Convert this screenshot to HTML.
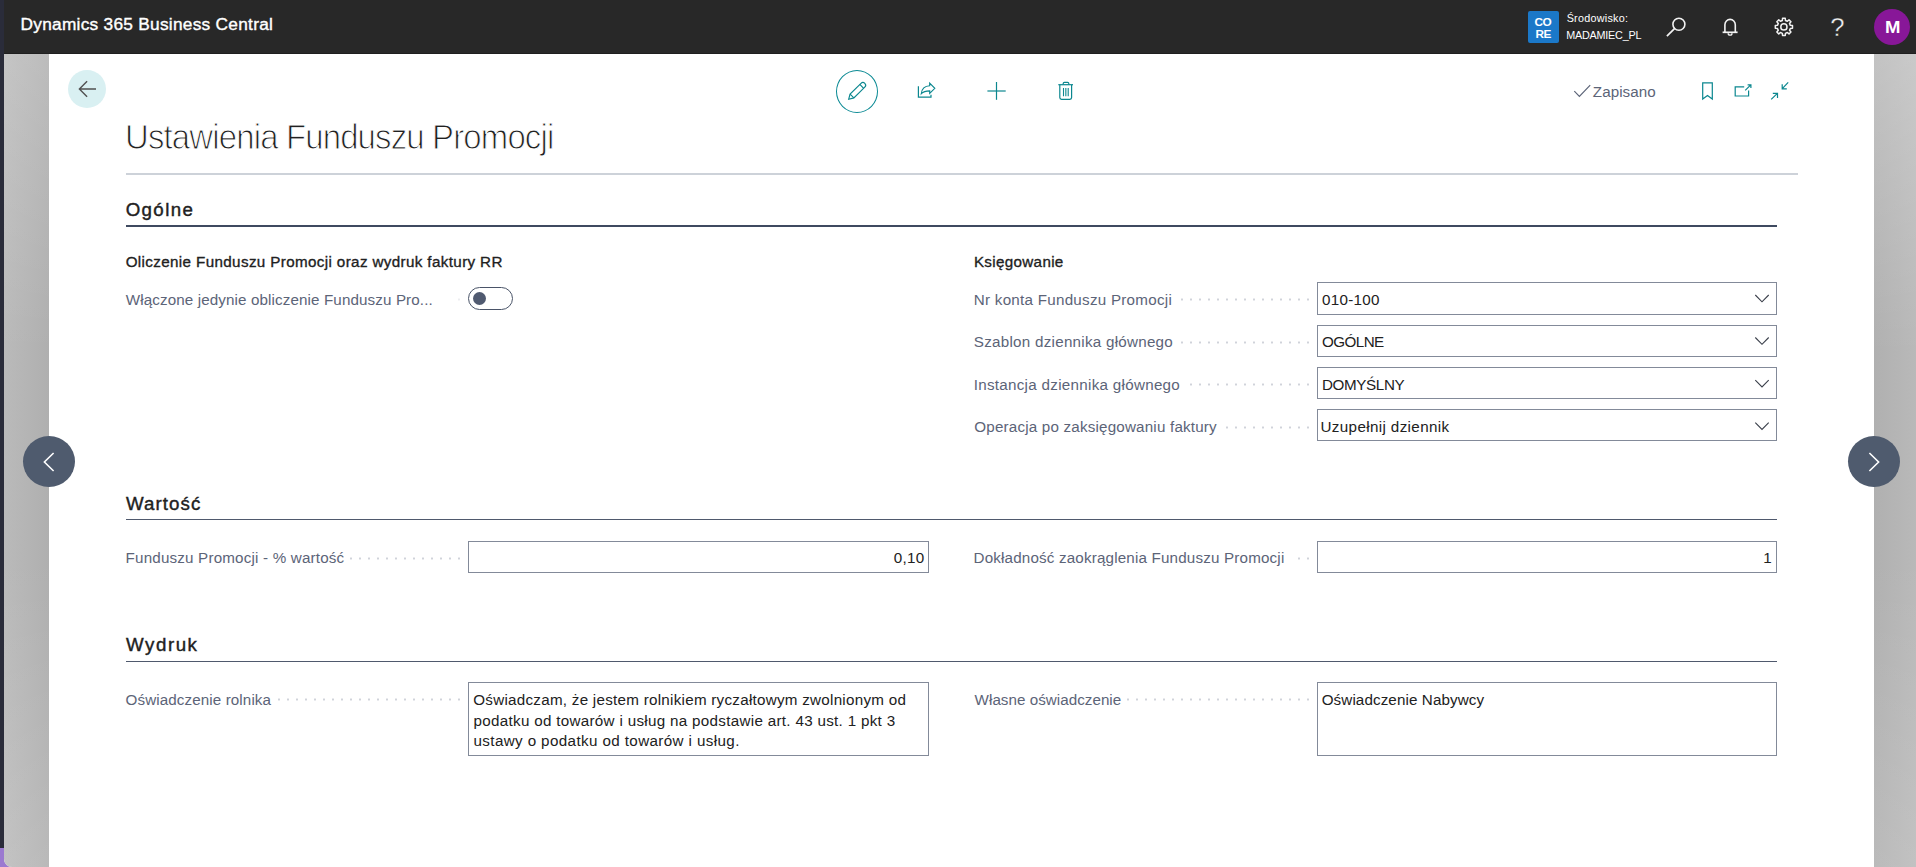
<!DOCTYPE html>
<html lang="pl">
<head>
<meta charset="utf-8">
<title>Ustawienia Funduszu Promocji - Dynamics 365 Business Central</title>
<style>
html,body{margin:0;padding:0}
body{width:1916px;height:867px;position:relative;overflow:hidden;background:#2a2c3a;font-family:"Liberation Sans",sans-serif}
.a{position:absolute}
.t{position:absolute;white-space:nowrap;line-height:1;margin:0;padding:0;font-weight:normal;display:block}
#deskp{left:0;top:848px;width:12px;height:19px;background:#9b7ad0}
#win{left:4px;top:0;width:1912px;height:867px;background:#fff;border-bottom-left-radius:8px;overflow:hidden}
#topbar{left:0;top:0;width:1912px;height:54px;background:#282828;box-shadow:inset 0 -1px 0 #1f1f1f}
#shL{left:0;top:54px;width:45px;height:813px;background:linear-gradient(180deg,rgba(255,255,255,.16) 0,rgba(255,255,255,0) 300px,rgba(255,255,255,0) 500px,rgba(255,255,255,.13) 813px),linear-gradient(90deg,#bababa,#afafaf)}
#shR{left:1870px;top:54px;width:42px;height:813px;background:linear-gradient(180deg,rgba(255,255,255,.24) 0,rgba(255,255,255,0) 300px,rgba(255,255,255,0) 500px,rgba(255,255,255,.13) 813px),linear-gradient(90deg,#b0b0b0,#b9b9b9)}
.hr{position:absolute;height:2px}
.box{position:absolute;box-sizing:border-box;border:1px solid #838a99;background:#fff}
.dots{position:absolute;height:3px;margin-top:-1px;background-image:radial-gradient(circle at 1px 1.5px,#d0d3da 0.85px,rgba(208,211,218,0) 1.35px);background-size:9px 3px;background-repeat:repeat-x}
.nav{position:absolute;width:52px;height:51px;border-radius:50%;background:#4f5b6e}
svg{position:absolute;overflow:visible}
</style>
</head>
<body>
<div class="a" id="deskp"></div>
<div class="a" id="win">
<div class="a" id="topbar"></div>
<div class="a" id="shL"></div>
<div class="a" id="shR"></div>
</div>

<!-- top bar -->
<div class="a" style="left:1528px;top:11px;width:31px;height:32px;background:#1b78c8;border-radius:2px"></div>
<div class="a" style="left:1874px;top:9px;width:36px;height:36px;border-radius:50%;background:#881798"></div>
<span class="t" id="qm" style="left:1830.3px;top:14.6px;font-size:25.6px;color:#f2f2f2;-webkit-text-stroke:0.35px #282828">?</span>
<svg width="1916" height="867" style="left:0;top:0" viewBox="0 0 1916 867" fill="none" stroke-linecap="butt" stroke-linejoin="miter">
<circle cx="1678.9" cy="24.2" r="6.0" stroke="#f2f2f2" stroke-width="1.6"/>
<path d="M1674.5,28.6 L1666.9,36.2" stroke="#f2f2f2" stroke-width="1.7"/>
<path d="M1724.9,32.2 V24.8 A5.2,5.4 0 0 1 1735.3,24.8 V32.2" stroke="#f2f2f2" stroke-width="1.6"/>
<path d="M1722.6,32.3 H1737.6" stroke="#f2f2f2" stroke-width="1.7"/>
<path d="M1728.2,33.2 A1.9,1.9 0 0 0 1732,33.2" stroke="#f2f2f2" stroke-width="1.4"/>
<path d="M1782.54,18.31 L1785.26,18.31 L1785.44,20.48 L1787.35,21.27 L1789.01,19.86 L1790.94,21.79 L1789.53,23.45 L1790.32,25.36 L1792.49,25.54 L1792.49,28.26 L1790.32,28.44 L1789.53,30.35 L1790.94,32.01 L1789.01,33.94 L1787.35,32.53 L1785.44,33.32 L1785.26,35.49 L1782.54,35.49 L1782.36,33.32 L1780.45,32.53 L1778.79,33.94 L1776.86,32.01 L1778.27,30.35 L1777.48,28.44 L1775.31,28.26 L1775.31,25.54 L1777.48,25.36 L1778.27,23.45 L1776.86,21.79 L1778.79,19.86 L1780.45,21.27 L1782.36,20.48 Z" stroke="#f2f2f2" stroke-width="1.5" stroke-linejoin="round"/>
<circle cx="1783.9" cy="26.9" r="3.1" stroke="#f2f2f2" stroke-width="1.5"/>
</svg>


<!-- page header -->
<div class="a" style="left:68px;top:70px;width:38px;height:38px;border-radius:50%;background:#d9f0f2"></div>
<div class="a" style="left:836px;top:70px;width:42px;height:43px;box-sizing:border-box;border:1.3px solid #0b8a94;border-radius:50%"></div>

<div class="hr" style="left:126px;top:173px;width:1672px;background:#cdd2d9"></div>
<div class="hr" style="left:126px;top:225px;width:1651px;background:#3f4a60"></div>
<div class="hr" style="left:126px;top:519px;width:1651px;height:1px;background:#4f596d"></div>
<div class="hr" style="left:126px;top:661px;width:1651px;height:1px;background:#4f596d"></div>

<!-- toggle -->
<div class="a" style="left:468px;top:287px;width:45px;height:23px;box-sizing:border-box;border:1.2px solid #4a5468;border-radius:12px;background:#fff"></div>
<div class="a" style="left:473px;top:292px;width:13px;height:13px;border-radius:50%;background:#505a70"></div>

<!-- inputs -->
<div class="box" style="left:1317px;top:282px;width:460px;height:33px"></div>
<div class="box" style="left:1317px;top:325px;width:460px;height:32px"></div>
<div class="box" style="left:1317px;top:367px;width:460px;height:32px"></div>
<div class="box" style="left:1317px;top:409px;width:460px;height:32px"></div>
<div class="box" style="left:468px;top:541px;width:461px;height:32px"></div>
<div class="box" style="left:1317px;top:541px;width:460px;height:32px"></div>
<div class="box" style="left:468px;top:682px;width:461px;height:74px"></div>
<div class="box" style="left:1317px;top:682px;width:460px;height:74px"></div>

<!-- dot leaders -->
<div class="dots" style="left:1181px;top:299px;width:128px"></div>
<div class="dots" style="left:1181px;top:342px;width:128px"></div>
<div class="dots" style="left:1190px;top:384px;width:119px"></div>
<div class="dots" style="left:1226px;top:427px;width:83px"></div>
<div class="dots" style="left:350px;top:558px;width:110px"></div>
<div class="dots" style="left:1298px;top:558px;width:11px"></div>
<div class="dots" style="left:278px;top:699px;width:182px"></div>
<div class="dots" style="left:1127px;top:699px;width:182px"></div>

<div class="dots" style="left:458px;top:299px;width:3px;opacity:.4"></div>

<!-- nav -->
<div class="nav" style="left:23px;top:436px"></div>
<div class="nav" style="left:1848px;top:436px"></div>
<svg width="1916" height="867" style="left:0;top:0" viewBox="0 0 1916 867" fill="none">
<path d="M96,89 H79.6 M87.1,81.3 L79.4,89 L87.1,96.7" stroke="#505050" stroke-width="1.4"/>
<g transform="translate(848.7,99.2) rotate(-44.5)" stroke="#0b878f" stroke-width="1.15" stroke-linejoin="miter"><path d="M0,0 L4.6,-2.7 H19.9 A2.7,2.7 0 0 1 19.9,2.7 H4.6 Z"/><path d="M4.6,-2.7 V2.7 M18.3,-2.7 V2.7"/></g>
<path d="M918.4,86.2 V97.2 H931 V94.8" stroke="#0b878f" stroke-width="1.2"/>
<path d="M929.7,83.2 L934.8,88.3 L929.7,93.4 V90.8 C926,90.8 923.2,91.6 921.3,93.7 C921.8,89 925.2,86 929.7,85.8 Z" stroke="#0b878f" stroke-width="1.15" stroke-linejoin="miter"/>
<path d="M996.5,82 V99.8" stroke="#0b878f" stroke-width="1.2"/><path d="M987.4,91 H1005.7" stroke="#0b878f" stroke-width="1.2"/>
<path d="M1058.3,84.7 H1073" stroke="#0b878f" stroke-width="1.2"/>
<path d="M1063.2,84.5 V83.6 Q1063.2,82.4 1064.4,82.4 H1067.6 Q1068.8,82.4 1068.8,83.6 V84.5" stroke="#0b878f" stroke-width="1.2"/>
<path d="M1059.8,85 V97.6 Q1059.8,99.3 1061.5,99.3 H1069.9 Q1071.6,99.3 1071.6,97.6 V85" stroke="#0b878f" stroke-width="1.2"/>
<path d="M1063.5,88 V96.3 M1065.85,88 V96.3 M1068.2,88 V96.3" stroke="#0b878f" stroke-width="1.1"/>
<path d="M1574.3,91.2 L1579.4,96.3 L1590.2,85.2" stroke="#5c6478" stroke-width="1.2"/>
<path d="M1702.7,99 V82.9 H1712.3 V99 L1707.5,95.6 Z" stroke="#0b878f" stroke-width="1.2" stroke-linejoin="miter"/>
<path d="M1744.2,86.8 H1735.2 V96 H1748.6 V90.6" stroke="#0b878f" stroke-width="1.2"/>
<path d="M1745.2,90.4 L1750.8,84.8 M1747.6,84.8 H1750.9 V88" stroke="#0b878f" stroke-width="1.2"/>
<path d="M1788.2,82.4 L1782.3,88.6 M1782.2,84.2 V88.8 H1786.8" stroke="#0b878f" stroke-width="1.2"/>
<path d="M1771.2,99.4 L1777.4,93.4 M1772.8,93.3 H1777.5 V98" stroke="#0b878f" stroke-width="1.2"/>
<path d="M1755.3,295.0 L1762,301.8 L1768.7,295.0" stroke="#3a3f4a" stroke-width="1.1"/>
<path d="M1755.3,337.5 L1762,344.3 L1768.7,337.5" stroke="#3a3f4a" stroke-width="1.1"/>
<path d="M1755.3,380.1 L1762,386.9 L1768.7,380.1" stroke="#3a3f4a" stroke-width="1.1"/>
<path d="M1755.3,422.6 L1762,429.4 L1768.7,422.6" stroke="#3a3f4a" stroke-width="1.1"/>
<path d="M53.6,453 L44.4,462 L53.6,471" stroke="#fff" stroke-width="1.6"/>
<path d="M1869.4,453 L1878.6,462 L1869.4,471" stroke="#fff" stroke-width="1.6"/>
</svg>


<span class="t" id="t_app" style="left:20.49px;top:15.86px;font-size:17.3px;font-weight:normal;color:#ffffff;letter-spacing:0.267px;-webkit-text-stroke:0.38px #ffffff;">Dynamics 365 Business Central</span>
<span class="t" id="t_env1" style="left:1566.67px;top:12.76px;font-size:10.8px;font-weight:normal;color:#ffffff;letter-spacing:0.257px;">Środowisko:</span>
<span class="t" id="t_env2" style="left:1566.14px;top:30.46px;font-size:10.8px;font-weight:normal;color:#ffffff;letter-spacing:-0.209px;">MADAMIEC_PL</span>
<span class="t" id="t_saved" style="left:1592.84px;top:83.73px;font-size:15.2px;font-weight:normal;color:#5c6478;letter-spacing:0.047px;">Zapisano</span>
<h1 class="t" id="t_title" style="left:124.77px;top:119.53px;font-size:35.4px;font-weight:normal;color:#212121;letter-spacing:-0.899px;-webkit-text-stroke:1.05px #fff;transform:scaleX(0.93);transform-origin:0 0;">Ustawienia Funduszu Promocji</h1>
<h2 class="t" id="t_h1" style="left:125.67px;top:201.07px;font-size:18.7px;font-weight:normal;color:#212121;letter-spacing:1.394px;-webkit-text-stroke:0.41px #212121;">Ogólne</h2>
<h3 class="t" id="t_g1" style="left:125.67px;top:254.03px;font-size:15.2px;font-weight:normal;color:#212121;letter-spacing:0.368px;-webkit-text-stroke:0.33px #212121;">Oliczenie Funduszu Promocji oraz wydruk faktury RR</h3>
<label class="t" id="t_l0" style="left:125.85px;top:292.23px;font-size:15.2px;font-weight:normal;color:#5c6478;letter-spacing:0.111px;">Włączone jedynie obliczenie Funduszu Pro...</label>
<h3 class="t" id="t_g2" style="left:973.91px;top:254.03px;font-size:15.2px;font-weight:normal;color:#212121;letter-spacing:0.329px;-webkit-text-stroke:0.33px #212121;">Księgowanie</h3>
<label class="t" id="t_l1" style="left:973.79px;top:292.13px;font-size:15.2px;font-weight:normal;color:#5c6478;letter-spacing:0.255px;">Nr konta Funduszu Promocji</label>
<label class="t" id="t_l2" style="left:973.83px;top:334.13px;font-size:15.2px;font-weight:normal;color:#5c6478;letter-spacing:0.257px;">Szablon dziennika głównego</label>
<label class="t" id="t_l3" style="left:973.66px;top:377.03px;font-size:15.2px;font-weight:normal;color:#5c6478;letter-spacing:0.286px;">Instancja dziennika głównego</label>
<label class="t" id="t_l4" style="left:974.29px;top:419.03px;font-size:15.2px;font-weight:normal;color:#5c6478;letter-spacing:0.188px;">Operacja po zaksięgowaniu faktury</label>
<span class="t" id="t_v1" style="left:1322.09px;top:292.13px;font-size:15.2px;font-weight:normal;color:#212121;letter-spacing:0.284px;">010-100</span>
<span class="t" id="t_v2" style="left:1322.05px;top:334.13px;font-size:15.2px;font-weight:normal;color:#212121;letter-spacing:-0.560px;">OGÓLNE</span>
<span class="t" id="t_v3" style="left:1322.04px;top:377.03px;font-size:15.2px;font-weight:normal;color:#212121;letter-spacing:-0.377px;">DOMYŚLNY</span>
<span class="t" id="t_v4" style="left:1320.50px;top:418.83px;font-size:15.2px;font-weight:normal;color:#212121;letter-spacing:0.363px;">Uzupełnij dziennik</span>
<h2 class="t" id="t_h2" style="left:126.07px;top:494.97px;font-size:18.7px;font-weight:normal;color:#212121;letter-spacing:1.062px;-webkit-text-stroke:0.41px #212121;">Wartość</h2>
<label class="t" id="t_l5" style="left:125.55px;top:550.23px;font-size:15.2px;font-weight:normal;color:#5c6478;letter-spacing:0.181px;">Funduszu Promocji - % wartość</label>
<span class="t" id="t_v5" style="left:893.76px;top:550.23px;font-size:15.2px;font-weight:normal;color:#212121;letter-spacing:0.288px;">0,10</span>
<label class="t" id="t_l6" style="left:973.55px;top:550.33px;font-size:15.2px;font-weight:normal;color:#5c6478;letter-spacing:0.170px;">Dokładność zaokrąglenia Funduszu Promocji</label>
<span class="t" id="t_v6" style="left:1763.32px;top:550.33px;font-size:15.2px;font-weight:normal;color:#212121;letter-spacing:0.000px;">1</span>
<h2 class="t" id="t_h3" style="left:126.07px;top:635.97px;font-size:18.7px;font-weight:normal;color:#212121;letter-spacing:1.542px;-webkit-text-stroke:0.41px #212121;">Wydruk</h2>
<label class="t" id="t_l7" style="left:125.56px;top:691.83px;font-size:15.2px;font-weight:normal;color:#5c6478;letter-spacing:0.103px;">Oświadczenie rolnika</label>
<span class="t" id="t_a1" style="left:473.29px;top:691.83px;font-size:15.2px;font-weight:normal;color:#212121;letter-spacing:0.264px;">Oświadczam, że jestem rolnikiem ryczałtowym zwolnionym od</span>
<span class="t" id="t_a2" style="left:473.44px;top:712.63px;font-size:15.2px;font-weight:normal;color:#212121;letter-spacing:0.307px;">podatku od towarów i usług na podstawie art. 43 ust. 1 pkt 3</span>
<span class="t" id="t_a3" style="left:473.48px;top:733.33px;font-size:15.2px;font-weight:normal;color:#212121;letter-spacing:0.385px;">ustawy o podatku od towarów i usług.</span>
<label class="t" id="t_l8" style="left:974.61px;top:692.13px;font-size:15.2px;font-weight:normal;color:#5c6478;letter-spacing:0.032px;">Własne oświadczenie</label>
<span class="t" id="t_v8" style="left:1321.69px;top:692.13px;font-size:15.2px;font-weight:normal;color:#212121;letter-spacing:0.105px;">Oświadczenie Nabywcy</span>
<span class="t" id="t_co" style="left:1534.54px;top:16.71px;font-size:11.8px;font-weight:bold;color:#ffffff;letter-spacing:-0.569px;">CO</span>
<span class="t" id="t_re" style="left:1535.60px;top:28.71px;font-size:11.8px;font-weight:bold;color:#ffffff;letter-spacing:-0.736px;">RE</span>
<span class="t" id="t_M" style="left:1884.71px;top:19.69px;font-size:15.6px;font-weight:bold;color:#ffffff;letter-spacing:0.000px;transform:scaleX(1.19);transform-origin:0 0;">M</span>
</body>
</html>
